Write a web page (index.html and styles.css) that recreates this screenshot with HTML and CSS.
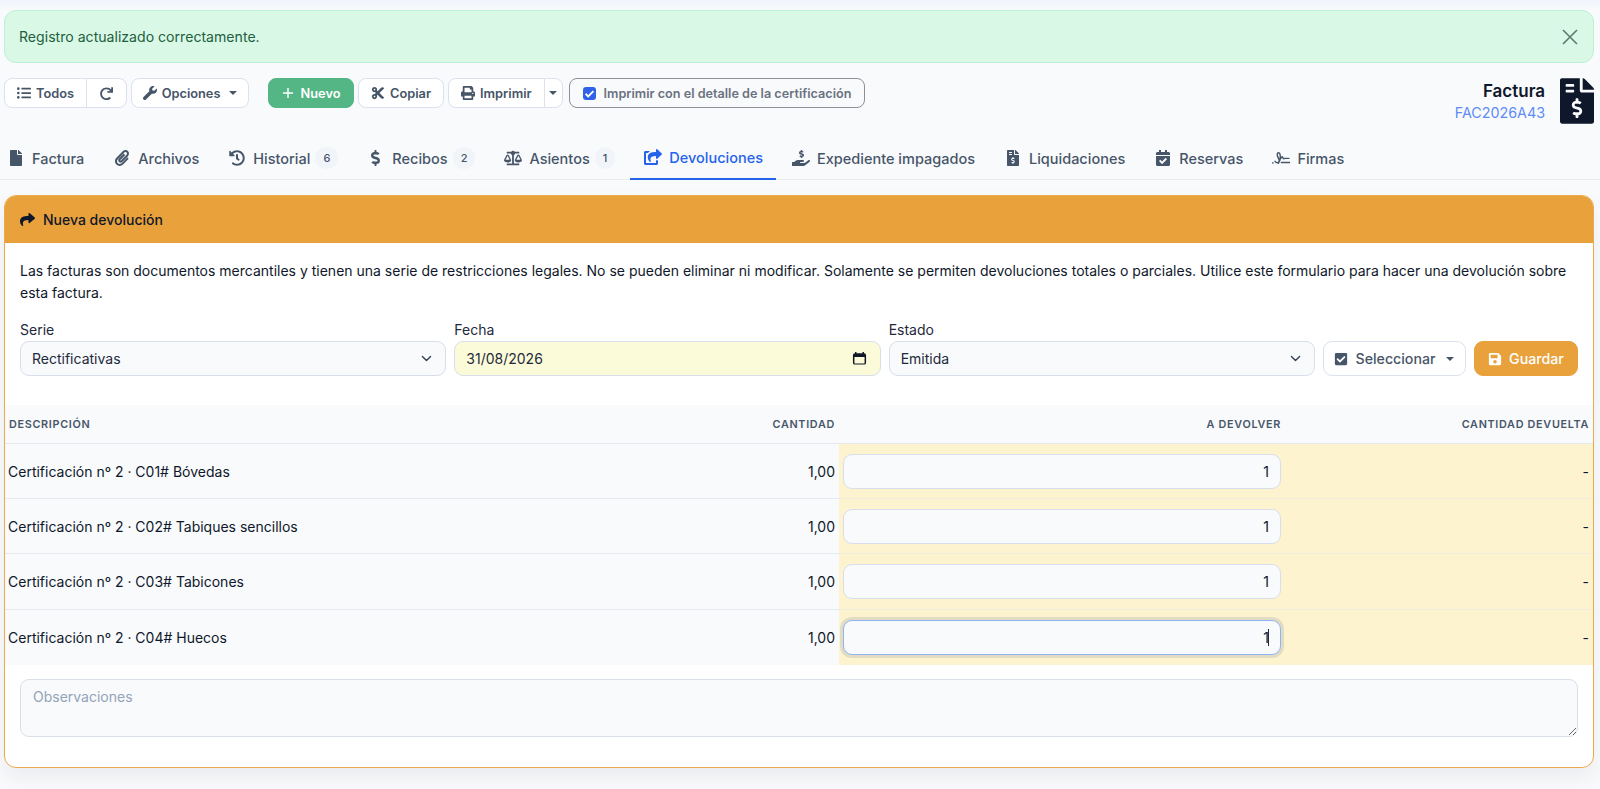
FILE: index.html
```html
<!DOCTYPE html>
<html lang="es">
<head>
    <meta charset="UTF-8">
    <meta name="viewport" content="width=device-width, initial-scale=1.0">
    <title>Factura FAC2026A43</title>
    <link rel="stylesheet" href="styles.css">
</head>
<body>
    <svg class="sprite" xmlns="http://www.w3.org/2000/svg">
        <symbol id="i-list" viewBox="0 0 512 512"><path d="M48 48a48 48 0 1 0 48 48 48 48 0 0 0-48-48zm0 160a48 48 0 1 0 48 48 48 48 0 0 0-48-48zm0 160a48 48 0 1 0 48 48 48 48 0 0 0-48-48zM496 384H176a16 16 0 0 0-16 16v32a16 16 0 0 0 16 16h320a16 16 0 0 0 16-16v-32a16 16 0 0 0-16-16zm0-320H176a16 16 0 0 0-16 16v32a16 16 0 0 0 16 16h320a16 16 0 0 0 16-16V80a16 16 0 0 0-16-16zm0 160H176a16 16 0 0 0-16 16v32a16 16 0 0 0 16 16h320a16 16 0 0 0 16-16v-32a16 16 0 0 0-16-16z"/></symbol>
        <symbol id="i-redo" viewBox="0 0 512 512"><path d="M500 8h-47c-6.800 0-12.200 5.700-12 12.500l4 82.700C399.500 49.700 331.800 16 256 16 119 16 8 127 8 264s111 248 248 248c64 0 122.300-24.200 166.300-64 5.100-4.600 5.300-12.500.5-17.400l-34-34c-4.500-4.500-11.700-4.700-16.500-.5C341.500 424.500 300.700 442 256 442c-98.300 0-178-79.700-178-178S157.700 86 256 86c61 0 114.800 30.700 146.900 77.500l-101.400-4.900c-6.800-.3-12.500 5.100-12.500 12v47c0 6.600 5.400 12 12 12h199c6.600 0 12-5.400 12-12V20c0-6.600-5.400-12-12-12z"/></symbol>
        <symbol id="i-wrench" viewBox="0 0 512 512"><path d="M507.730 109.100c-2.240-9.030-13.540-12.090-20.120-5.510l-74.360 74.360-67.880-11.310-11.310-67.880 74.360-74.360c6.620-6.620 3.430-17.900-5.660-20.160-47.380-11.740-99.550.91-136.580 37.930-39.640 39.640-50.550 97.100-34.050 147.200L18.740 402.760c-24.990 24.990-24.990 65.510 0 90.500 24.990 24.990 65.510 24.990 90.500 0l213.210-213.210c50.120 16.710 107.470 5.680 147.370-34.220 37.070-37.070 49.700-89.320 37.910-136.730z"/></symbol>
        <symbol id="i-cut" viewBox="0 0 448 512"><path d="M278.060 256L444.480 89.570c4.690-4.690 4.690-12.290 0-16.970-32.800-32.800-85.990-32.800-118.790 0L210.180 188.120l-24.860-24.860c4.310-10.920 6.680-22.810 6.680-35.260 0-53.020-42.980-96-96-96S0 74.980 0 128s42.980 96 96 96c4.540 0 8.990-.32 13.360-.93L142.290 256l-32.930 32.930c-4.370-.61-8.830-.93-13.360-.93-53.020 0-96 42.980-96 96s42.980 96 96 96 96-42.980 96-96c0-12.450-2.370-24.340-6.680-35.260l24.860-24.860L325.690 439.400c32.800 32.800 85.990 32.800 118.790 0 4.690-4.680 4.690-12.280 0-16.970L278.060 256zM96 160c-17.640 0-32-14.360-32-32s14.360-32 32-32 32 14.360 32 32-14.360 32-32 32zm0 256c-17.640 0-32-14.360-32-32s14.360-32 32-32 32 14.360 32 32-14.360 32-32 32z"/></symbol>
        <symbol id="i-print" viewBox="0 0 512 512"><path d="M448 192V77.250c0-8.490-3.370-16.620-9.370-22.630L393.370 9.370c-6-6-14.140-9.370-22.630-9.370H96C78.330 0 64 14.330 64 32v160c-35.350 0-64 28.650-64 64v112c0 8.840 7.160 16 16 16h48v96c0 17.670 14.330 32 32 32h320c17.670 0 32-14.330 32-32v-96h48c8.840 0 16-7.160 16-16V256c0-35.350-28.650-64-64-64zm-64 256H128v-96h256v96zm0-224H128V64h192v48c0 8.840 7.160 16 16 16h48v96zm48 72c-13.250 0-24-10.750-24-24 0-13.260 10.750-24 24-24s24 10.740 24 24c0 13.250-10.750 24-24 24z"/></symbol>
        <symbol id="i-file" viewBox="0 0 384 512"><path d="M224 136V0H24C10.700 0 0 10.700 0 24v464c0 13.300 10.700 24 24 24h336c13.300 0 24-10.700 24-24V160H248c-13.200 0-24-10.800-24-24zm160-14.100v6.100H256V0h6.100c6.400 0 12.500 2.500 17 7l97.900 98c4.500 4.500 7 10.600 7 16.900z"/></symbol>
        <symbol id="i-invoice" viewBox="0 0 384 512"><path d="M377 105L279.100 7c-4.500-4.500-10.600-7-17-7H256v128h128v-6.100c0-6.300-2.500-12.400-7-16.900zm-153 31V0H24C10.700 0 0 10.700 0 24v464c0 13.300 10.700 24 24 24h336c13.300 0 24-10.700 24-24V160H248c-13.200 0-24-10.800-24-24zM64 72c0-4.420 3.580-8 8-8h80c4.420 0 8 3.580 8 8v16c0 4.420-3.580 8-8 8H72c-4.420 0-8-3.580-8-8V72zm0 80v-16c0-4.420 3.580-8 8-8h80c4.420 0 8 3.580 8 8v16c0 4.420-3.580 8-8 8H72c-4.420 0-8-3.580-8-8zm144 263.880V440c0 4.420-3.580 8-8 8h-16c-4.420 0-8-3.580-8-8v-24.290c-11.290-.58-22.270-4.520-31.370-11.350-3.900-2.930-4.100-8.770-.57-12.140l11.750-11.210c2.770-2.640 6.890-2.760 10.130-.73 3.870 2.420 8.260 3.720 12.820 3.720h28.110c6.500 0 11.800-5.920 11.800-13.190 0-5.950-3.610-11.190-8.770-12.730l-45-13.500c-18.590-5.580-31.580-23.420-31.580-43.390 0-24.520 19.050-44.440 42.670-45.070V232c0-4.420 3.580-8 8-8h16c4.420 0 8 3.580 8 8v24.290c11.290.58 22.270 4.510 31.370 11.350 3.900 2.930 4.100 8.770.57 12.140l-11.750 11.210c-2.770 2.640-6.890 2.760-10.130.73-3.870-2.430-8.260-3.720-12.820-3.720h-28.110c-6.500 0-11.800 5.920-11.800 13.190 0 5.950 3.610 11.190 8.770 12.730l45 13.500c18.590 5.580 31.580 23.420 31.580 43.390 0 24.530-19.050 44.440-42.670 45.070z"/></symbol>
        <symbol id="i-clip" viewBox="0 0 448 512"><path d="M43.246 466.142c-58.430-60.289-57.341-157.511 1.386-217.581L254.392 34c44.316-45.332 116.351-45.336 160.671 0 43.890 44.894 43.943 117.329 0 162.276L232.214 383.128c-29.855 30.537-78.633 30.111-107.982-.998-28.275-29.970-27.368-77.473 1.452-106.953l143.743-146.835c6.182-6.314 16.312-6.422 22.626-.241l22.861 22.379c6.315 6.182 6.422 16.312.241 22.626L171.427 319.927c-4.932 5.045-5.236 13.428-.648 18.292 4.372 4.634 11.245 4.711 15.688.165l182.849-186.851c19.613-20.062 19.613-52.725-.011-72.798-19.189-19.627-49.957-19.637-69.154 0L90.390 293.295c-34.763 35.560-35.299 93.120-1.191 128.313 34.010 35.093 88.985 35.137 123.058.286l172.060-175.999c6.177-6.319 16.307-6.433 22.626-.256l22.877 22.364c6.319 6.177 6.434 16.307.256 22.626l-172.060 175.998c-59.576 60.938-155.943 60.216-214.770-.485z"/></symbol>
        <symbol id="i-history" viewBox="0 0 512 512"><path d="M504 255.531c.253 136.640-111.180 248.372-247.820 248.468-59.015.042-113.223-20.530-155.822-54.911-11.077-8.940-11.905-25.541-1.839-35.607l11.267-11.267c8.609-8.609 22.353-9.551 31.891-1.984C173.062 425.135 212.781 440 256 440c101.705 0 184-82.311 184-184 0-101.705-82.311-184-184-184-48.814 0-93.149 18.969-126.068 49.932l50.754 50.754c10.080 10.080 2.941 27.314-11.313 27.314H24c-8.837 0-16-7.163-16-16V38.627c0-14.254 17.234-21.393 27.314-11.314l49.372 49.372C129.209 34.136 189.552 8 256 8c136.810 0 247.747 110.780 248 247.531zm-180.912 78.784l9.823-12.630c8.138-10.463 6.253-25.542-4.210-33.679L288 256.349V152c0-13.255-10.745-24-24-24h-16c-13.255 0-24 10.745-24 24v135.651l65.409 50.874c10.463 8.137 25.541 6.253 33.679-4.210z"/></symbol>
        <symbol id="i-dollar" viewBox="0 0 320 512"><path d="M209.200 233.400l-108-31.600C88.700 198.200 80 186.500 80 173.500c0-16.300 13.200-29.500 29.500-29.500h66.300c12.200 0 24.200 3.700 34.200 10.500 6.100 4.100 14.300 3.100 19.500-2l34.800-34c7.100-6.900 6.100-18.400-1.800-24.500C238 74.800 207.400 64.100 176 64V16c0-8.800-7.200-16-16-16h-32c-8.800 0-16 7.200-16 16v48h-2.500C45.800 64-5.400 118.700.5 183.600c4.200 46.100 39.400 83.600 83.800 96.600l102.500 30c12.500 3.700 21.200 15.300 21.200 28.300 0 16.300-13.200 29.500-29.500 29.500h-66.300C100 368 88 364.300 78 357.500c-6.100-4.100-14.300-3.100-19.500 2l-34.800 34c-7.100 6.900-6.100 18.400 1.800 24.500 24.500 19.200 55.100 29.900 86.500 30v48c0 8.800 7.200 16 16 16h32c8.800 0 16-7.200 16-16v-48.200c46.600-.9 90.300-28.600 105.700-72.700 21.500-61.600-14.600-124.800-72.500-141.700z"/></symbol>
        <symbol id="i-scale" viewBox="0 0 640 512"><path d="M256 336h-.02c0-16.180 1.340-8.730-85.050-181.510-17.650-35.290-68.190-35.360-85.870 0C-2.060 328.750.02 320.330.02 336H0c0 44.180 57.310 80 128 80s128-35.820 128-80zM128 176l72 144H56l72-144zm511.980 160c0-16.180 1.340-8.730-85.050-181.510-17.650-35.290-68.190-35.360-85.870 0-87.120 174.260-85.040 165.840-85.040 181.510H384c0 44.180 57.310 80 128 80s128-35.820 128-80h-.02zM440 320l72-144 72 144H440zm88 128H352V153.250c23.510-10.290 41.160-31.480 46.390-57.250H528c8.840 0 16-7.160 16-16V48c0-8.840-7.160-16-16-16H383.640C369.040 12.680 346.090 0 320 0s-49.040 12.680-63.640 32H112c-8.840 0-16 7.160-16 16v32c0 8.840 7.160 16 16 16h129.610c5.230 25.760 22.870 46.960 46.390 57.250V448H112c-8.840 0-16 7.160-16 16v32c0 8.840 7.160 16 16 16h416c8.840 0 16-7.160 16-16v-32c0-8.840-7.160-16-16-16z"/></symbol>
        <symbol id="i-share-square" viewBox="0 0 576 512"><path d="M568.482 177.448L424.479 313.433C409.300 327.768 384 317.140 384 295.985v-71.963c-144.575.970-205.566 35.113-164.775 171.353 4.483 14.973-12.846 26.567-25.006 17.330C155.252 383.105 120 326.488 120 269.339c0-143.937 117.599-172.500 264-173.312V24.012c0-21.174 25.317-31.768 40.479-17.448l144.003 135.988c10.020 9.463 10.028 25.425 0 34.896zM384 370v78H64V128h60c15-15 32-28 51-37 8-4 5-27-4-27H48C21.500 64 0 85.500 0 112v352c0 26.500 21.500 48 48 48h352c26.500 0 48-21.500 48-48v-96c0-12-64-12-64 2z"/></symbol>
        <symbol id="i-share" viewBox="0 0 512 512"><path d="M503.691 189.836L327.687 37.851C312.281 24.546 288 35.347 288 56.015v80.053C127.371 137.907 0 170.100 0 322.326c0 61.441 39.581 122.309 83.333 154.132 13.653 9.931 33.111-2.533 28.077-18.631C66.066 312.814 132.917 274.316 288 272.085V360c0 20.700 24.300 31.453 39.687 18.164l176.004-152c11.071-9.562 11.086-26.753 0-36.328z"/></symbol>
        <symbol id="i-hand" viewBox="0 0 576 512"><path d="M271.060 144.300l54.270 14.300a8.590 8.590 0 0 1 6.630 8.100c0 4.600-4.090 8.400-9.120 8.400h-35.600a30 30 0 0 1-11.190-2.200c-5.240-2.200-11.280-1.700-15.300 2l-19 17.500a11.680 11.680 0 0 0-2.250 2.660 11.420 11.420 0 0 0 3.880 15.740 83.770 83.770 0 0 0 34.510 11.500V240c0 8.800 7.830 16 17.370 16h17.370c9.550 0 17.380-7.200 17.380-16v-18.100c32.930-3.600 57.840-31 53.500-63-3.150-23-22.460-41.300-46.560-47.700L282.680 97.400a8.590 8.590 0 0 1-6.630-8.100c0-4.600 4.090-8.400 9.120-8.400h35.600A30 30 0 0 1 332 83.100c5.230 2.200 11.280 1.700 15.300-2l19-17.500a11.310 11.310 0 0 0 2.170-2.600 11.430 11.430 0 0 0-3.840-15.780 83.820 83.820 0 0 0-34.520-11.500V16c0-8.800-7.820-16-17.370-16h-17.370C285.820 0 278 7.200 278 16v18.100c-32.890 3.600-57.850 31-53.510 63 3.140 23 22.510 41.300 46.570 47.200zM565.270 328.100c-11.800-10.700-30.200-10-42.600 0L430.270 402a63.640 63.640 0 0 1-40 14H272a16 16 0 0 1 0-32h78.290c15.900 0 30.710-10.900 33.250-26.600a31.200 31.200 0 0 0 .46-5.460A32 32 0 0 0 352 320H192a117.660 117.660 0 0 0-74.100 26.290L71.400 384H16a16 16 0 0 0-16 16v96a16 16 0 0 0 16 16h356.770a64 64 0 0 0 40-14L564 377a32 32 0 0 0 1.270-48.900z"/></symbol>
        <symbol id="i-calcheck" viewBox="0 0 448 512"><path d="M436 160H12c-6.627 0-12-5.373-12-12v-36c0-26.510 21.490-48 48-48h48V12c0-6.627 5.373-12 12-12h40c6.627 0 12 5.373 12 12v52h128V12c0-6.627 5.373-12 12-12h40c6.627 0 12 5.373 12 12v52h48c26.510 0 48 21.490 48 48v36c0 6.627-5.373 12-12 12zM12 192h424c6.627 0 12 5.373 12 12v260c0 26.510-21.490 48-48 48H48c-26.510 0-48-21.490-48-48V204c0-6.627 5.373-12 12-12zm333.296 95.947l-28.169-28.398c-4.667-4.705-12.265-4.736-16.970-.068L194.120 364.665l-45.980-46.352c-4.667-4.705-12.266-4.736-16.971-.068l-28.397 28.170c-4.705 4.667-4.736 12.265-.068 16.970l82.601 83.269c4.667 4.705 12.265 4.736 16.970.068l142.953-141.805c4.705-4.667 4.736-12.265.068-16.970z"/></symbol>
        <symbol id="i-signature" viewBox="0 0 24 17"><path fill="none" stroke="currentColor" stroke-width="1.900" stroke-linecap="round" stroke-linejoin="round" d="M4 13c2.500 3 5.500 2 6.500-1.500.9-3.500 1-9.500-1.500-10-2.200-.4-2.600 3.500-1 6 1.600 2.500 2.500 5.500.5 8M11.500 9.500c1.500-2.500 2.500-3.500 3-1.500.4 1.600 1 1.800 2.500 1h5.500M12.500 14.500h11"/><circle cx="1.200" cy="15" r="1.100"/></symbol>
        <symbol id="i-check" viewBox="0 0 448 512"><path d="M400 480H48c-26.510 0-48-21.490-48-48V80c0-26.510 21.490-48 48-48h352c26.510 0 48 21.490 48 48v352c0 26.510-21.490 48-48 48zm-204.686-98.059l184-184c6.248-6.248 6.248-16.379 0-22.627l-22.627-22.627c-6.248-6.248-16.379-6.249-22.628 0L184 302.745l-70.059-70.059c-6.248-6.248-16.379-6.248-22.628 0l-22.627 22.627c-6.248 6.248-6.248 16.379 0 22.627l104 104c6.249 6.250 16.379 6.250 22.628.001z"/></symbol>
        <symbol id="i-save" viewBox="0 0 448 512"><path d="M433.941 129.941l-83.882-83.882A48 48 0 0 0 316.118 32H48C21.490 32 0 53.490 0 80v352c0 26.510 21.490 48 48 48h352c26.510 0 48-21.490 48-48V163.882a48 48 0 0 0-14.059-33.941zM224 416c-35.346 0-64-28.654-64-64 0-35.346 28.654-64 64-64s64 28.654 64 64c0 35.346-28.654 64-64 64zm96-304.520V212c0 6.627-5.373 12-12 12H76c-6.627 0-12-5.373-12-12V108c0-6.627 5.373-12 12-12h228.520c3.183 0 6.235 1.264 8.485 3.515l3.480 3.480A11.996 11.996 0 0 1 320 111.480z"/></symbol>
        <symbol id="i-calendar" viewBox="0 0 16 16"><path d="M4 1v2M12 1v2" fill="none" stroke="currentColor" stroke-width="1.600"/><path d="M3 2.500h10a2 2 0 0 1 2 2v8a2 2 0 0 1-2 2H3a2 2 0 0 1-2-2v-8a2 2 0 0 1 2-2zm-.4 4v6.200c0 .4.300.7.700.7h9.400c.4 0 .7-.3.700-.7V6.500z"/></symbol>
    </svg>

    <div class="page">
        <div class="alert">
            <span>Registro actualizado correctamente.</span>
            <button class="alert-close" aria-label="Cerrar">
                <svg viewBox="0 0 16 16"><path d="M1 1l14 14M15 1L1 15"/></svg>
            </button>
        </div>

        <div class="toolbar">
            <div class="btn-group">
                <button class="btn"><svg class="ico"><use href="#i-list"/></svg>Todos</button>
                <button class="btn btn-square"><svg class="ico"><use href="#i-redo"/></svg></button>
            </div>
            <button class="btn btn-opciones"><svg class="ico"><use href="#i-wrench"/></svg>Opciones<span class="caret"></span></button>
            <button class="btn btn-green">
                <svg class="ico plus" viewBox="0 0 12 12"><path d="M6 1v10M1 6h10"/></svg>Nuevo
            </button>
            <button class="btn"><svg class="ico"><use href="#i-cut"/></svg>Copiar</button>
            <div class="btn-group">
                <button class="btn"><svg class="ico"><use href="#i-print"/></svg>Imprimir</button>
                <button class="btn btn-caret"><span class="caret"></span></button>
            </div>
            <label class="check-pill">
                <span class="check-box"><svg viewBox="0 0 10 10"><path d="M2 5.200l2 2 4-4"/></svg></span>
                Imprimir con el detalle de la certificación
            </label>
            <div class="doc-title">
                <div class="doc-text">
                    <strong>Factura</strong>
                    <a href="#">FAC2026A43</a>
                </div>
                <svg class="doc-icon"><use href="#i-invoice"/></svg>
            </div>
        </div>

        <nav class="tabs">
            <a class="tab"><svg class="ico"><use href="#i-file"/></svg>Factura</a>
            <a class="tab"><svg class="ico"><use href="#i-clip"/></svg>Archivos</a>
            <a class="tab"><svg class="ico"><use href="#i-history"/></svg>Historial<span class="badge">6</span></a>
            <a class="tab"><svg class="ico"><use href="#i-dollar"/></svg>Recibos<span class="badge">2</span></a>
            <a class="tab"><svg class="ico ico-wide"><use href="#i-scale"/></svg>Asientos<span class="badge">1</span></a>
            <a class="tab active"><svg class="ico ico-wide"><use href="#i-share-square"/></svg>Devoluciones</a>
            <a class="tab"><svg class="ico ico-wide"><use href="#i-hand"/></svg>Expediente impagados</a>
            <a class="tab"><svg class="ico"><use href="#i-invoice"/></svg>Liquidaciones</a>
            <a class="tab"><svg class="ico"><use href="#i-calcheck"/></svg>Reservas</a>
            <a class="tab"><svg class="ico ico-wide"><use href="#i-signature"/></svg>Firmas</a>
        </nav>

        <section class="card">
            <header class="card-header"><svg class="ico"><use href="#i-share"/></svg>Nueva devolución</header>

            <p class="card-text">Las facturas son documentos mercantiles y tienen una serie de restricciones legales. No se pueden eliminar ni modificar. Solamente se permiten devoluciones totales o parciales. Utilice este formulario para hacer una devolución sobre esta factura.</p>

            <div class="form-row">
                <div class="field">
                    <label>Serie</label>
                    <select class="control"><option>Rectificativas</option></select>
                </div>
                <div class="field">
                    <label>Fecha</label>
                    <div class="control control-date">31/08/2026<svg class="ico"><use href="#i-calendar"/></svg></div>
                </div>
                <div class="field">
                    <label>Estado</label>
                    <select class="control"><option>Emitida</option></select>
                </div>
                <button class="btn btn-large"><svg class="ico"><use href="#i-check"/></svg>Seleccionar<span class="caret"></span></button>
                <button class="btn btn-large btn-orange"><svg class="ico"><use href="#i-save"/></svg>Guardar</button>
            </div>

            <table class="lines">
                <thead>
                    <tr>
                        <th class="col-desc">Descripción</th>
                        <th>Cantidad</th>
                        <th class="col-return">A devolver</th>
                        <th class="col-returned">Cantidad devuelta</th>
                    </tr>
                </thead>
                <tbody>
                    <tr>
                        <td>Certificación nº 2 · C01# Bóvedas</td>
                        <td class="num">1,00</td>
                        <td class="cell-yellow num"><input class="qty" value="1"></td>
                        <td class="cell-yellow num">-</td>
                    </tr>
                    <tr>
                        <td>Certificación nº 2 · C02# Tabiques sencillos</td>
                        <td class="num">1,00</td>
                        <td class="cell-yellow num"><input class="qty" value="1"></td>
                        <td class="cell-yellow num">-</td>
                    </tr>
                    <tr>
                        <td>Certificación nº 2 · C03# Tabicones</td>
                        <td class="num">1,00</td>
                        <td class="cell-yellow num"><input class="qty" value="1"></td>
                        <td class="cell-yellow num">-</td>
                    </tr>
                    <tr>
                        <td>Certificación nº 2 · C04# Huecos</td>
                        <td class="num">1,00</td>
                        <td class="cell-yellow num"><input class="qty qty-focus" value="1"></td>
                        <td class="cell-yellow num">-</td>
                    </tr>
                </tbody>
            </table>

            <textarea class="notes" placeholder="Observaciones"></textarea>
        </section>
    </div>
</body>
</html>
```

FILE: styles.css
```css
* {
    box-sizing: border-box;
}

html, body {
    height: 100%;
}

body {
    margin: 0;
    overflow: hidden;
    font-family: Inter, "Liberation Sans", sans-serif;
    font-size: 14px;
    color: #0f172a;
    background: linear-gradient(#f1f4fb, #f8fafc 10px);
}

.sprite {
    display: none;
}

.ico {
    width: 14px;
    height: 14px;
    flex: none;
    fill: currentColor;
}

.page {
    padding: 10px 6px 0 4px;
}

/* Aviso */
.alert {
    display: flex;
    align-items: center;
    justify-content: space-between;
    height: 53px;
    padding: 0 15px 0 14px;
    background-color: #daf8e6;
    border: 1px solid #bdf0d2;
    border-radius: 12px;
    color: #22603f;
    font-size: 14.1px;
}

.alert-close {
    padding: 0;
    border: none;
    background: none;
    display: flex;
}

.alert-close svg {
    width: 16px;
    height: 16px;
    fill: none;
    stroke: #5f7a6d;
    stroke-width: 1.6;
}

/* Barra de botones */
.toolbar {
    display: flex;
    align-items: flex-start;
    gap: 4px;
    height: 47px;
    margin-top: 15px;
}

.btn {
    display: inline-flex;
    align-items: center;
    justify-content: center;
    gap: 5px;
    height: 30px;
    padding: 0 12px;
    background-color: #fff;
    border: 1px solid #dbe1ee;
    border-radius: 8px;
    color: #475569;
    font-family: inherit;
    font-size: 12.8px;
    font-weight: 600;
    white-space: nowrap;
}

.btn .ico {
    width: 14px;
    height: 14px;
}

.btn-group {
    display: flex;
}

.btn-group .btn:first-child {
    border-radius: 8px 0 0 8px;
}

.btn-group .btn:last-child {
    margin-left: -1px;
    border-radius: 0 8px 8px 0;
}

.btn-square {
    width: 41px;
    padding: 0;
}

.btn-square .ico {
    width: 13px;
    height: 13px;
}

.btn-caret {
    width: 19px;
    padding: 0;
}

.caret {
    width: 0;
    height: 0;
    margin-left: 4px;
    border-top: 4px solid currentColor;
    border-left: 4px solid transparent;
    border-right: 4px solid transparent;
}

.btn-caret .caret {
    margin: 0;
}

.btn-opciones {
    width: 118px;
    padding: 0;
}

.btn-green {
    width: 86px;
    margin-left: 15px;
    padding: 0;
    background-color: #54b585;
    border-color: #54b585;
    color: #fff;
}

.plus {
    fill: none;
    stroke: currentColor;
    stroke-width: 1.4;
}

.btn .plus {
    width: 12px;
    height: 12px;
    margin-right: 2px;
}

.check-pill {
    display: flex;
    align-items: center;
    gap: 8px;
    height: 30px;
    margin-left: 2px;
    padding: 0 13px;
    border: 1px solid #8b8f96;
    border-radius: 8px;
    color: #6b7280;
    font-size: 12.65px;
    font-weight: 600;
}

.check-box {
    display: flex;
    width: 13px;
    height: 13px;
    background-color: #2f62e6;
    border-radius: 3px;
}

.check-box svg {
    fill: none;
    stroke: #fff;
    stroke-width: 1.4;
}

.doc-title {
    display: flex;
    align-items: flex-start;
    gap: 15px;
    margin-left: auto;
}

.doc-text {
    display: flex;
    flex-direction: column;
    align-items: flex-end;
    padding-top: 3px;
}

.doc-text strong {
    font-size: 17px;
    font-weight: 600;
    line-height: 20px;
}

.doc-text a {
    margin-top: 3px;
    color: #5f8cf5;
    font-size: 14.3px;
    line-height: 18px;
    text-decoration: none;
}

.doc-icon {
    width: 34px;
    height: 46px;
    fill: #0f172a;
}

/* Pestañas */
.tabs {
    display: flex;
    gap: 4px;
    height: 39px;
    margin-top: 16px;
    margin-left: -4px;
    margin-right: -6px;
    border-bottom: 1px solid #e8ebf0;
}

.tab {
    display: flex;
    align-items: center;
    gap: 8px;
    height: 39px;
    padding: 0 13px 5px;
    color: #475569;
    font-size: 14.5px;
    font-weight: 500;
    white-space: nowrap;
}

.tab:first-child {
    padding-left: 8px;
}

.tab .ico {
    width: 16px;
    height: 16px;
}

.tab .ico-wide {
    width: 18px;
    margin: 0 -1px;
}

.tab.active {
    margin-left: -2px;
    padding-left: 15px;
    color: #2563eb;
    border-bottom: 2px solid #2563eb;
}

.badge {
    margin-left: -3px;
    padding: 0 8px;
    background-color: #f1f5f9;
    border-radius: 10px;
    color: #475569;
    font-size: 11px;
    line-height: 22px;
}

/* Tarjeta */
.card {
    height: 573px;
    margin-top: 15px;
    background-color: #fff;
    border: 1px solid #ecaa4e;
    border-radius: 12px;
    box-shadow: 0 10px 20px rgba(15, 23, 42, 0.06);
    overflow: hidden;
}

.card-header {
    display: flex;
    align-items: center;
    gap: 8px;
    height: 47px;
    padding: 0 15px;
    background-color: #e9a23b;
    font-size: 14px;
    font-weight: 500;
}

.card-header .ico {
    width: 15px;
    height: 15px;
}

.card-text {
    margin: 0;
    padding: 17px 15px 0;
    font-size: 14px;
    line-height: 22px;
}

.form-row {
    display: flex;
    align-items: flex-end;
    gap: 8px;
    margin-top: 16px;
    padding: 0 15px;
}

.field {
    flex: 1;
    min-width: 0;
}

.field label {
    display: block;
    color: #1e293b;
    font-size: 14px;
    line-height: 19px;
    margin-bottom: 2px;
}

.control {
    display: flex;
    align-items: center;
    justify-content: space-between;
    width: 100%;
    height: 35px;
    padding: 0 11px;
    background-color: #f8fafc;
    border: 1px solid #d8deeb;
    border-radius: 9px;
    color: #1e293b;
    font-family: inherit;
    font-size: 14px;
    appearance: none;
}

select.control {
    background-image: url("data:image/svg+xml,%3Csvg xmlns='http://www.w3.org/2000/svg' viewBox='0 0 16 16'%3E%3Cpath fill='none' stroke='%23334155' stroke-width='1.7' stroke-linecap='round' stroke-linejoin='round' d='M3 5.500l5 5 5-5'/%3E%3C/svg%3E");
    background-repeat: no-repeat;
    background-position: right 12px center;
    background-size: 13px;
}

.control-date {
    padding-right: 13px;
    background-color: #fbfbd9;
}

.control-date .ico {
    width: 15px;
    height: 15px;
    color: #111827;
}

.btn-large {
    flex: none;
    width: 143px;
    gap: 7px;
    height: 35px;
    padding: 0;
    border-radius: 9px;
    font-size: 14.2px;
    font-weight: 500;
}

.btn-orange {
    width: 104px;
    background-color: #e9a23b;
    border-color: #e9a23b;
    color: #fff;
}

/* Tabla de líneas */
.lines {
    width: 100%;
    margin-top: 29px;
    border-collapse: collapse;
    table-layout: fixed;
}

.lines th {
    height: 38px;
    padding: 2px 4px 0;
    background-color: #f8fafc;
    border-bottom: 1px solid #e5e9f0;
    color: #475569;
    font-size: 10.8px;
    font-weight: 600;
    letter-spacing: 0.7px;
    text-align: right;
    text-transform: uppercase;
}

.lines th.col-desc {
    width: 700px;
    text-align: left;
}

.lines th.col-return {
    width: 446px;
}

.lines th.col-returned {
    width: 308px;
}

.lines td {
    height: 55.4px;
    padding: 1px 4px 0;
    background-color: #f8fafc;
    border-bottom: 1px solid #e5e9f0;
    font-size: 14px;
}

.lines tr:last-child td {
    border-bottom: none;
}

.lines td:first-child {
    padding-left: 3px;
}

.lines td.num {
    text-align: right;
}

.lines td.cell-yellow {
    background-color: #fdf3cf;
    border-bottom-color: #f1ece0;
}

.qty {
    display: block;
    width: 100%;
    height: 35px;
    padding: 0 11px;
    background-color: #f8fafc;
    border: 1px solid #d8deeb;
    border-radius: 9px;
    color: #0f172a;
    font-family: inherit;
    font-size: 14px;
    text-align: right;
}

/* Campo con el foco, con el cursor de texto pintado */
.qty-focus {
    border-color: #8fb4f4;
    box-shadow: 0 0 0 3px rgba(100, 116, 139, 0.18);
    background-image: linear-gradient(#1e293b, #1e293b);
    background-repeat: no-repeat;
    background-position: right 11px center;
    background-size: 1px 17px;
}

.notes {
    display: block;
    width: calc(100% - 30px);
    height: 58px;
    margin: 14px 15px 0;
    padding: 8px 12px;
    background-color: #f8fafc;
    border: 1px solid #d8deeb;
    border-radius: 9px;
    color: #1e293b;
    font-family: inherit;
    font-size: 14px;
}

.notes::placeholder {
    color: #94a3b8;
}
```
